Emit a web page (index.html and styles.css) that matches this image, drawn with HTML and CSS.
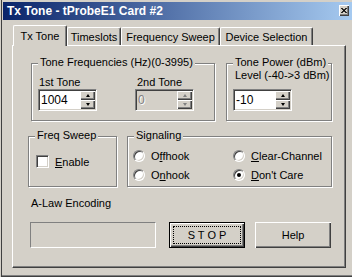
FILE: index.html
```html
<!DOCTYPE html>
<html lang="en">
<head>
	<meta charset="UTF-8">
	<title>Tx Tone - tProbeE1 Card #2</title>
	<link rel="stylesheet" href="styles.css">
</head>
<body>
<div class="window">
	<div class="titlebar">
		<span class="title">Tx Tone - tProbeE1 Card #2</span>
		<span class="close"><svg width="8" height="7" viewBox="0 0 8 7"><path d="M0.5 0.5L6.5 6.5M1.5 0.5L7.5 6.5M6.5 0.5L0.5 6.5M7.5 0.5L1.5 6.5" stroke="#000" stroke-width="1" shape-rendering="crispEdges"/></svg></span>
	</div>
	<div class="tabs">
		<div class="tab active">Tx Tone</div>
		<div class="tab t-slots">Timeslots</div>
		<div class="tab t-sweep">Frequency Sweep</div>
		<div class="tab t-device">Device Selection</div>
	</div>
	<div class="panel">
		<div class="row row-tone">
			<div class="group g-freq">
				<span class="legend">Tone Frequencies (Hz)(0-3995)</span>
				<div class="fields">
					<div class="field">
						<div class="lbl">1st Tone</div>
						<div class="spin"><span class="val">1004</span><span class="arrows"><i class="up"></i><i class="down"></i></span></div>
					</div>
					<div class="field f-second">
						<div class="lbl">2nd Tone</div>
						<div class="spin disabled"><span class="val">0</span><span class="arrows"><i class="up"></i><i class="down"></i></span></div>
					</div>
				</div>
			</div>
			<div class="group g-power">
				<span class="legend">Tone Power (dBm)</span>
				<div class="lbl level">Level (-40-&gt;3 dBm)</div>
				<div class="spin power"><span class="val">-10</span><span class="arrows"><i class="up"></i><i class="down"></i></span></div>
			</div>
		</div>
		<div class="row row-opts">
			<div class="group g-sweep">
				<span class="legend">Freq Sweep</span>
				<div class="check"><span class="box"></span><span><u>E</u>nable</span></div>
			</div>
			<div class="group g-signal">
				<span class="legend">Signaling</span>
				<div class="radios">
					<div class="radio"><span class="dot"></span><span>O<u>f</u>fhook</span></div>
					<div class="radio"><span class="dot"></span><span><u>C</u>lear-Channel</span></div>
					<div class="radio"><span class="dot"></span><span>O<u>n</u>hook</span></div>
					<div class="radio"><span class="dot on"></span><span><u>D</u>on't Care</span></div>
				</div>
			</div>
		</div>
		<div class="alaw">A-Law Encoding</div>
		<div class="row row-btns">
			<div class="status"></div>
			<div class="btn default"><span class="focus">S T O P</span></div>
			<div class="btn help">Help</div>
		</div>
	</div>
</div>
</body>
</html>
```

FILE: styles.css
```css
body{
	margin: 0;
	background: #d4d0c8;
	font: 11px "Liberation Sans", Arial, sans-serif;
	color: #000;
}
.window{
	width: 352px;
	height: 277px;
	box-sizing: border-box;
	padding-top: 2px;
	background: #d4d0c8;
	box-shadow: inset 1px 0 #d4d0c8, inset 2px 0 #404040, inset 0 -1px #404040, inset 0 -2px #808080;
}
.titlebar{
	margin-left: 3px;
	height: 18px;
	display: flex;
	align-items: center;
	justify-content: space-between;
	padding-left: 4px;
	background: linear-gradient(to right, #0a246a, #a6caf0);
	color: #fff;
	font-weight: 700;
	font-size: 12px;
}
.close{
	width: 10px;
	height: 11px;
	margin-right: 3px;
	margin-top: -1px;
	box-sizing: border-box;
	display: flex;
	align-items: center;
	justify-content: center;
	background: #d4d0c8;
	box-shadow: inset 1px 1px #fff, inset -1px -1px #404040, inset -2px -2px #808080;
}
.close svg{
	display: block;
	margin: 0 0 1px 0;
	transform: scale(0.8);
}

/* tabs */
.tabs{
	display: flex;
	align-items: flex-end;
	height: 20px;
	margin: 5px 0 0 13px;
}
.tab{
	height: 18px;
	box-sizing: border-box;
	border-top: 1px solid #fff;
	border-left: 1px solid #fff;
	border-right: 1px solid #404040;
	border-radius: 2px 2px 0 0;
	box-shadow: inset -1px 0 #808080;
	padding-top: 3px;
	line-height: 13px;
	text-align: center;
}
.tab.active{
	position: relative;
	z-index: 1;
	height: 21px;
	margin-bottom: -1px;
	width: 54px;
	padding-top: 4px;
	background: #d4d0c8;
}
.t-slots{ width: 54px; }
.t-sweep{ width: 99px; }
.t-device{ width: 93px; }

.panel{
	margin-left: 12px;
	width: 334px;
	height: 223px;
	box-sizing: border-box;
	border-top: 1px solid #fff;
	border-left: 1px solid #fff;
	border-right: 1px solid #404040;
	border-bottom: 1px solid #404040;
	box-shadow: inset -1px -1px #808080;
}
.row{
	display: flex;
}

/* group boxes */
.group{
	box-sizing: border-box;
	border: 1px solid #808080;
	box-shadow: 1px 1px #fff, inset 1px 1px #fff;
}
.legend{
	display: table;
	margin: -8px 0 0 6px;
	padding: 0 2px;
	line-height: 13px;
	background: #d4d0c8;
}
.lbl{
	line-height: 13px;
}
.row-tone{
	margin-top: 17px;
	padding-left: 18px;
}
.g-freq{
	width: 184px;
	height: 58px;
}
.fields{
	display: flex;
	margin: 7px 0 0 6px;
}
.field .lbl{
	margin-left: 1px;
}
.f-second{
	margin-left: 38px;
}
.f-second .lbl{
	margin-left: 2px;
}
.g-power{
	width: 106px;
	height: 58px;
	margin-left: 11px;
}
.level{
	margin: 0 0 7px 8px;
}
.power{
	margin-left: 6px;
	width: 58px;
}

/* spin edit */
.spin{
	width: 59px;
	height: 22px;
	box-sizing: border-box;
	display: flex;
	align-items: center;
	justify-content: space-between;
	background: #fff;
	border: 1px solid;
	border-color: #808080 #fff #fff #808080;
	box-shadow: inset 1px 1px #404040, inset -1px -1px #d4d0c8;
	padding: 1px 1px 1px 2px;
}
.val{
	font-size: 12px;
	line-height: 14px;
}
.arrows{
	display: flex;
	flex-direction: column;
	width: 15px;
	height: 18px;
}
.arrows i{
	flex: 1;
	display: flex;
	align-items: center;
	justify-content: center;
	background: #d4d0c8;
	box-shadow: inset 1px 1px #fff, inset -1px -1px #404040, inset -2px -2px #808080;
}
.arrows i::after{
	content: "";
	width: 0;
	height: 0;
	border-left: 2.5px solid transparent;
	border-right: 2.5px solid transparent;
}
.up::after{
	border-bottom: 3px solid #000;
}
.down::after{
	border-top: 3px solid #000;
}
.spin.disabled{
	background: #d4d0c8;
}
.spin.disabled .val{
	color: #808080;
	text-shadow: 1px 1px #fff;
}
.spin.disabled .up::after{
	border-bottom-color: #808080;
}
.spin.disabled .down::after{
	border-top-color: #808080;
}

/* options */
.row-opts{
	margin-top: 15px;
	padding-left: 15px;
}
.g-sweep{
	width: 89px;
	height: 51px;
}
.check{
	display: flex;
	align-items: center;
	margin: 13px 0 0 7px;
}
.box{
	width: 13px;
	height: 13px;
	box-sizing: border-box;
	margin-right: 6px;
	background: #fff;
	border: 1px solid;
	border-color: #808080 #fff #fff #808080;
	box-shadow: inset 1px 1px #404040, inset -1px -1px #d4d0c8;
}
.g-signal{
	width: 205px;
	height: 51px;
	margin-left: 10px;
}
.radios{
	display: grid;
	grid-template-columns: 100px 1fr;
	row-gap: 5px;
	margin: 7px 0 0 5px;
}
.radio{
	display: flex;
	align-items: center;
	height: 14px;
}
.dot{
	width: 12px;
	height: 12px;
	box-sizing: border-box;
	margin-right: 6px;
	border-radius: 50%;
	background: #fff;
	border: 1px solid;
	border-color: #808080 #fff #fff #808080;
	box-shadow: inset 1px 1px #404040, inset -1px -1px #d4d0c8;
	display: flex;
	align-items: center;
	justify-content: center;
}
.dot.on::after{
	content: "";
	width: 4px;
	height: 4px;
	border-radius: 50%;
	background: #000;
}
.alaw{
	margin: 10px 0 0 18px;
	line-height: 13px;
}

/* buttons */
.row-btns{
	margin-top: 12px;
	padding-left: 17px;
}
.status{
	width: 126px;
	height: 26px;
	box-sizing: border-box;
	border: 1px solid;
	border-color: #808080 #fff #fff #808080;
}
.btn{
	width: 76px;
	height: 26px;
	box-sizing: border-box;
	display: flex;
	align-items: center;
	justify-content: center;
	box-shadow: inset 1px 1px #fff, inset -1px -1px #404040, inset -2px -2px #808080;
}
.btn.default{
	margin-left: 13px;
	border: 1px solid #000;
	padding: 3px;
}
.focus{
	flex: 1;
	align-self: stretch;
	display: flex;
	align-items: center;
	justify-content: center;
	outline: 1px dotted #000;
	outline-offset: -1px;
}
.btn.help{
	margin-left: 10px;
}
```
